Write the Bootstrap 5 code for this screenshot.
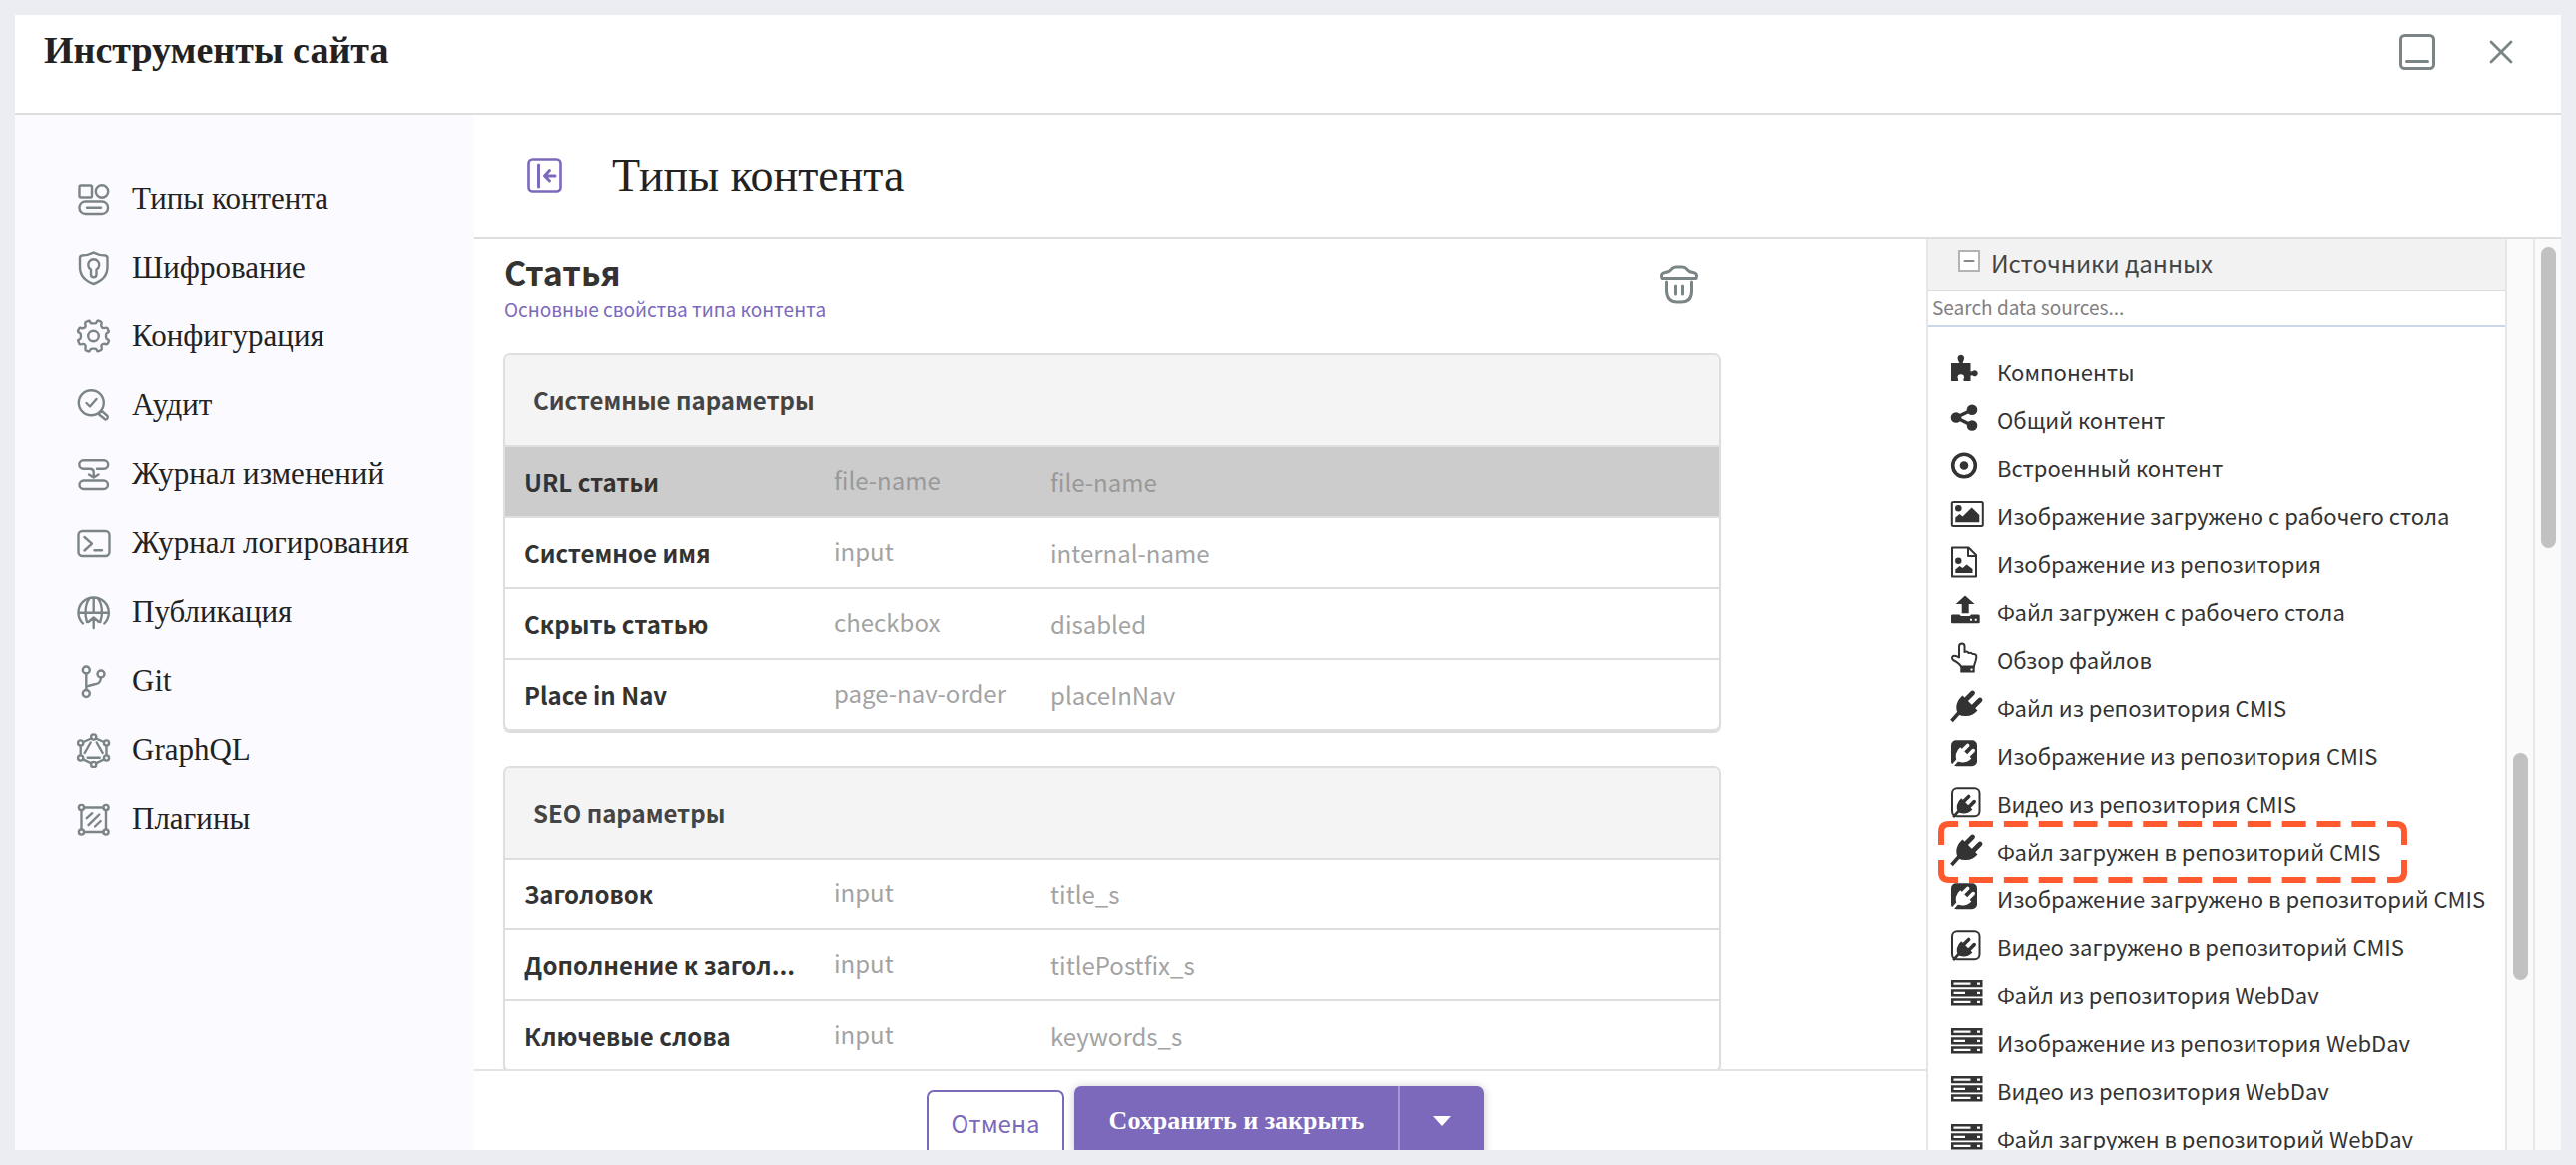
<!DOCTYPE html>
<html lang="ru">
<head>
<meta charset="utf-8">
<meta name="viewport" content="width=device-width, initial-scale=1">
<title>Инструменты сайта</title>
<link rel="stylesheet" href="https://cdn.jsdelivr.net/npm/bootstrap@5.3.0/dist/css/bootstrap.min.css">
<style>
  :root { --ui: "Noto Sans CJK SC", "Noto Sans", sans-serif; --serif: "Liberation Serif", serif; --accent: #7c69bc; --line: #dedede; --muted: #a3a3a3; }
  body { background: #ecedf2; font-family: var(--ui); font-size: 24px; line-height: 32px; color: #333; padding: 15px; }
  svg { fill: none; stroke: currentColor; stroke-width: 2; stroke-linecap: round; stroke-linejoin: round; flex: none; display: block; }
  .line-b { border-bottom: 2px solid var(--line); }
  .serif { font-family: var(--serif); color: #222; }
  .site-head { height: 100px; padding: 13px 46px 0 29px; }
  .site-head h1 { font-size: 38px; line-height: 44px; }
  .head-tools { gap: 50px; }
  .tool-btn { border: 0; background: none; padding: 0; color: #7c8585; }
  .side-nav { width: 460px; background: #fbfaff; padding: 49px 0 0 60px; font-size: 31px; }
  .side-nav a { height: 69px; gap: 21px; color: #222; text-decoration: none; }
  .side-nav svg { color: #7c8585; stroke-width: 2.4; }
  .view-head { height: 124px; padding: 0 50px; gap: 48px; }
  .view-head h2 { font-size: 46px; line-height: 54px; }
  .view-head .tool-btn { color: var(--accent); }
  .type-area { padding: 12px 205px 0 29px; }
  .type-title { font-size: 34px; line-height: 42px; }
  .type-link { font-size: 19px; line-height: 26px; color: var(--accent); text-decoration: none; }
  .type-head { height: 103px; padding: 0 20px 0 1px; }
  .params { border: 2px solid var(--line); border-radius: 7px; box-shadow: 0 2px 1px #dadada; overflow: hidden; margin-bottom: 35px; }
  .params table { width: 100%; table-layout: fixed; border-collapse: separate; border-spacing: 0; }
  .params .col-name { width: 329px; }
  .params .col-kind { width: 217px; }
  .params th, .params td { height: 71px; padding: 0; border-bottom: 2px solid var(--line); vertical-align: middle; }
  .params thead th { height: 92px; padding-left: 28px; background: #f4f4f4; color: #444; }
  .params tbody th { padding-left: 19px; color: #333; }
  .params td { color: var(--muted); }
  .params .kind { padding-bottom: 3px; }
  .params tbody tr:last-child > * { border-bottom: 0; height: 69px; }
  .params .picked > * { background: #ccc; color: #999; }
  .params .picked > th { color: #333; }
  .foot { height: 81px; border-top: 2px solid #e4e4e4; padding: 15px 0 0 10px; gap: 10px; }
  .foot .btn { height: 70px; border-radius: 7px; padding: 0; }
  .foot .btn-cancel { --bs-btn-hover-color: var(--accent); width: 138px; height: 66px; margin-top: 4px; border: 2px solid var(--accent); color: var(--accent); background: #fff; font-size: 24px; }
  .foot .btn-group { box-shadow: 0 1px 10px rgba(0,0,0,.22); border-radius: 7px; }
  .foot .btn-save { background: var(--accent); color: #fff; border: 0; width: 325px; font: 700 26px var(--serif); border-radius: 7px 0 0 7px; }
  .foot .btn-drop { background: var(--accent); color: #fff; border: 0; border-left: 2px solid #a598d2; width: 86px; border-radius: 0 7px 7px 0; }
  .sources { width: 582px; border: solid #e6e6e6; border-width: 0 2px; }
  .sources-head { height: 53px; padding: 0 0 4px 30px; gap: 11px; background: #f2f2f2; color: #444; }
  .sources .form-control { height: 36px; padding: 0 4px 4px; font-size: 19px; color: #555; border: 0; border-bottom: 2px solid #cbd7e8; box-shadow: none; }
  .sources .form-control::placeholder { color: #808080; }
  .sources ul { padding: 20px 0 0 22px; font-size: 22px; }
  .sources li { height: 48px; gap: 13px; white-space: nowrap; }
  .solid { fill: currentColor; stroke: none; }
  .frame-mark { top: -6px; left: -13px; color: #ff5a2f; }
  .track { width: 26px; background: #fafafa; }
  .track-inner { width: 28px; border-right: 2px solid #e8e8e8; }
  .thumb { width: 15px; border-radius: 8px; background: #c1c1c1; }
</style>
</head>
<body class="vh-100 overflow-hidden">
<svg width="0" height="0" class="position-absolute" aria-hidden="true">
  <defs>
    <g id="plugshape"><path d="M1.500 34 L9 25.500" stroke-width="3.600" stroke-linecap="butt"/><path d="M16 12.500 L22.500 6 M23.500 19.500 L30 13" stroke-width="4.800"/><path d="M12.500 8.500 L27.500 23.500 Q22 29.500 15 29 Q11 29 8.500 27.500 Q5.500 23 6.500 18 Q8 12 12.500 8.500z" fill="currentColor" stroke="none"/></g>
  </defs>
  <symbol id="types" viewBox="0 0 36 36"><rect x="4.500" y="4.500" width="12.500" height="12" rx="1.500"/><circle cx="27" cy="10.500" r="6.200"/><rect x="4.500" y="20.500" width="28.500" height="12.500" rx="6"/><path d="M12 26.700h14"/></symbol>
  <symbol id="shield" viewBox="0 0 36 36"><path d="M18.700 2.500 C14 5 10 5.500 7 5.500 Q5 6 5 8 V17 C5 25 10 31 18.700 34 C27 31 32.500 25 32.500 17 V8 Q32.500 6 30.500 5.500 C27 5.500 23 5 18.700 2.500z"/><path d="M16 19.500 a5.500 5.500 0 1 1 5.500 0 V24.500 a2.700 2.700 0 0 1 -5.500 0z"/></symbol>
  <symbol id="gear" viewBox="0 0 36 36"><g transform="translate(18.500 18)"><path d="M-1.500 -12.600 H1.500 Q3 -12.700 3.500 -14.500 Q4.200 -16 5.500 -15.200 L7.500 -14.300 Q8.500 -13.700 8 -12 Q7.500 -10.500 8 -9.500 Q9 -7.500 11 -8 Q13 -8.800 14 -7.800 L15.200 -5 Q15.700 -3.800 14 -3.300 Q12.600 -2.800 12.600 -1.500 V1.500 Q12.700 3 14.500 3.500 Q16 4.200 15.200 5.500 L14.300 7.500 Q13.700 8.500 12 8 Q10.500 7.500 9.500 8 Q7.500 9 8 11 Q8.800 13 7.800 14 L5 15.200 Q3.800 15.700 3.300 14 Q2.800 12.600 1.500 12.600 H-1.500 Q-3 12.700 -3.500 14.500 Q-4.200 16 -5.500 15.200 L-7.500 14.300 Q-8.500 13.700 -8 12 Q-7.500 10.500 -8 9.500 Q-9 7.500 -11 8 Q-13 8.800 -14 7.800 L-15.200 5 Q-15.700 3.800 -14 3.300 Q-12.600 2.800 -12.600 1.500 V-1.500 Q-12.700 -3 -14.500 -3.500 Q-16 -4.200 -15.200 -5.500 L-14.300 -7.500 Q-13.700 -8.500 -12 -8 Q-10.500 -7.500 -9.500 -8 Q-7.500 -9 -8 -11 Q-8.800 -13 -7.800 -14 L-5 -15.200 Q-3.800 -15.700 -3.300 -14 Q-2.800 -12.600 -1.500 -12.600z"/><circle r="5.300"/></g></symbol>
  <symbol id="audit" viewBox="0 0 36 36"><circle cx="16.300" cy="15.700" r="12.500"/><path d="M11.500 16 L15 19.500 L21.500 12"/><path d="M23.500 27 L26.800 23.800 L32.500 29 Q33.500 30.500 32.300 31.700 Q30.800 33 29.500 31.800z"/></symbol>
  <symbol id="changes" viewBox="0 0 36 36"><path d="M22 12.700 H29 a4.200 4.200 0 0 0 0 -8.400 H8.500 a4.200 4.200 0 0 0 0 8.400 H15 Q18.700 12.700 18.700 16 V21 M14 18.500 L18.700 21.500 L23.500 18.500"/><rect x="4.500" y="24.500" width="28.500" height="8.500" rx="4.200"/></symbol>
  <symbol id="console" viewBox="0 0 36 36"><rect x="3.500" y="6" width="31" height="25" rx="4"/><path d="M9.500 12 L17 18.700 L9.500 25.500 M19.500 25.300 H27"/></symbol>
  <symbol id="globe" viewBox="0 0 36 36"><path d="M8 29.500 A15.200 15.200 0 1 1 29.300 29.500 M3.500 18.800 H34 M18.700 4 V18.800 M12 28 C9.500 21 10 9 15 4 M25.300 28 C28 21 27.500 9 22.500 4 M18.700 34 V24 M13.500 28 L18.700 23.500 L24 28"/></symbol>
  <symbol id="git" viewBox="0 0 36 36"><circle cx="11.300" cy="7" r="3.500"/><circle cx="26" cy="11" r="3.500"/><circle cx="11.300" cy="30.500" r="3.500"/><path d="M11.300 10.500 V27 M26 14.500 C25.500 23 20 20 12 23.500"/></symbol>
  <symbol id="graph" viewBox="0 0 36 36"><g><circle cx="18.700" cy="5" r="2.600"/><circle cx="31.500" cy="11" r="2.600"/><circle cx="31.500" cy="26" r="2.600"/><circle cx="18.700" cy="32.500" r="2.600"/><circle cx="5.700" cy="26" r="2.600"/><circle cx="5.700" cy="11" r="2.600"/></g><path d="M21 6.500 L29 10 M16.300 6.500 L8.300 10 M5.700 13.700 V23.300 M31.500 13.700 V23.300 M8 27.300 L16.300 31.300 M29.200 27.300 L21 31.300 M9.700 21 L15.700 10.500 M21.700 10.500 L27.700 21 M12.700 25.700 H24.700"/></symbol>
  <symbol id="plugins" viewBox="0 0 36 36"><circle cx="6.500" cy="6.500" r="2.600"/><circle cx="31" cy="6.500" r="2.600"/><circle cx="6.500" cy="31" r="2.600"/><circle cx="31" cy="31" r="2.600"/><path d="M9 6.500 H28.500 M9 31 H28.500 M6.500 9 V28.500 M31 9 V28.500 M11.700 17.200 L17.300 12.200 M13.500 24.200 L24.300 13.500 M20 25.500 L25.700 20"/></symbol>

  <symbol id="puzzle" viewBox="0 0 34 40"><path class="solid" d="M1 12 H9.500 Q8.500 11 7.800 8.500 A3.300 3.300 0 1 1 13.800 8.500 Q13 11 12.500 12 H20.500 V20.500 Q22 20.500 23.500 19.500 A3 3 0 1 1 23.500 25 Q22 24 20.500 24.500 V30 H13.500 Q13 28.500 14 26.500 A3.200 3.200 0 1 0 7.500 26.500 Q8.500 28.500 8 30 H1z"/></symbol>
  <symbol id="share" viewBox="0 0 34 40"><path d="M22 10.700 L6 18.500 L22 26.500" stroke-width="3.500"/><g class="solid"><circle cx="6" cy="18.500" r="5.300"/><circle cx="22" cy="10.700" r="5.300"/><circle cx="22" cy="26.500" r="5.300"/></g></symbol>
  <symbol id="target" viewBox="0 0 34 40"><circle cx="14" cy="18.500" r="11.300" stroke-width="3.600"/><circle class="solid" cx="14" cy="18.500" r="4.300"/></symbol>
  <symbol id="picture" viewBox="0 0 34 40"><rect x="1.800" y="7" width="31" height="24" rx="1.500"/><circle class="solid" cx="8.300" cy="13.300" r="3.300"/><path class="solid" d="M5.300 27.300 V22.500 L9.500 19 L12.500 21.500 L21.700 12.500 L29.300 20 V27.300z"/></symbol>
  <symbol id="filepic" viewBox="0 0 34 40"><path d="M2 4.500 H18.500 L26 12 V33.500 H2z M18 5 V13 H26"/><circle class="solid" cx="8.300" cy="17.700" r="3.200"/><path class="solid" d="M5.300 30 V26.500 L9.500 23 L12.500 25 L16.500 21.500 L22.500 26 V30z"/></symbol>
  <symbol id="upload" viewBox="0 0 34 40"><path class="solid" d="M15 4.500 L24.500 13 H18.700 V22.300 H11.700 V13 H5.700z"/><path class="solid" fill-rule="evenodd" d="M2 23.500 H9.500 Q10 25 12 25 H18.500 Q20.500 25 21 23.500 H28.500 Q29.700 23.500 29.700 25 V31 Q29.700 32.300 28.500 32.300 H2 Q1 32.300 1 31 V25 Q1 23.500 2 23.500z M20 27.800 V29.800 H22 V27.800z M24.700 27.800 V29.800 H26.700 V27.800z"/></symbol>
  <symbol id="hand" viewBox="0 0 34 40"><path d="M11 27.500 C9.500 24.500 6 22.500 3 21 Q1 18.500 3 17 Q5.500 16 9 18.500 V7 Q9.500 4.500 11.700 4.500 Q14.300 4.500 14.500 7 V13 Q17 11.500 18.500 14 Q21 13 22.500 15 Q26.500 14.500 26.300 18 C26.300 22 24.500 23 24 27.500z"/><path class="solid" fill-rule="evenodd" d="M10.300 27.500 H24.700 V33.500 H10.300z M20.500 29.500 V31.500 H22.500 V29.500z"/></symbol>
  <symbol id="plug" viewBox="0 0 34 40"><use href="#plugshape"/></symbol>
  <symbol id="plugfill" viewBox="0 0 34 40"><rect class="solid" x="1" y="5.300" width="26" height="26" rx="5"/><g style="color:#fff" transform="translate(1 6) scale(.74)"><use href="#plugshape"/></g></symbol>
  <symbol id="plugbox" viewBox="0 0 34 40"><rect x="2" y="5.300" width="27.500" height="28" rx="5"/><g transform="translate(2 9) scale(.74)"><use href="#plugshape"/></g></symbol>
  <symbol id="server" viewBox="0 0 34 40"><path class="solid" fill-rule="evenodd" d="M1 6h31.500v7.200H1z M3.500 8.500v2.200h17v-2.200z M27 8.500v2.200h3v-2.200z M1 15.200h31.500v7.200H1z M3.500 17.700v2.200h11.500v-2.200z M27 17.700v2.200h3v-2.200z M1 24.200h31.500v7.200H1z M3.500 26.700v2.200h17v-2.200z M27 26.700v2.200h3v-2.200z"/></symbol>
</svg>

<div class="bg-white h-100 d-flex flex-column overflow-hidden">
  <header class="site-head line-b d-flex align-items-start justify-content-between flex-shrink-0">
    <h1 class="serif fw-bold m-0">Инструменты сайта</h1>
    <div class="head-tools d-flex align-items-center">
      <button type="button" class="tool-btn" aria-label="Свернуть"><svg width="40" height="48" viewBox="0 0 40 48"><rect x="3.500" y="7.500" width="33" height="33" rx="4" stroke-width="3"/><path d="M9.500 33.500 H30.500" stroke-width="3"/></svg></button>
      <button type="button" class="tool-btn" aria-label="Закрыть"><svg width="28" height="48" viewBox="0 0 28 48"><path d="M4 14 L24 34 M24 14 L4 34" stroke-width="2.800"/></svg></button>
    </div>
  </header>

  <div class="d-flex flex-grow-1 overflow-hidden">
    <nav class="side-nav serif flex-shrink-0 d-flex flex-column" aria-label="Инструменты">
      <a href="#" class="d-flex align-items-center"><svg width="36" height="36"><use href="#types"/></svg>Типы контента</a>
      <a href="#" class="d-flex align-items-center"><svg width="36" height="36"><use href="#shield"/></svg>Шифрование</a>
      <a href="#" class="d-flex align-items-center"><svg width="36" height="36"><use href="#gear"/></svg>Конфигурация</a>
      <a href="#" class="d-flex align-items-center"><svg width="36" height="36"><use href="#audit"/></svg>Аудит</a>
      <a href="#" class="d-flex align-items-center"><svg width="36" height="36"><use href="#changes"/></svg>Журнал изменений</a>
      <a href="#" class="d-flex align-items-center"><svg width="36" height="36"><use href="#console"/></svg>Журнал логирования</a>
      <a href="#" class="d-flex align-items-center"><svg width="36" height="36"><use href="#globe"/></svg>Публикация</a>
      <a href="#" class="d-flex align-items-center"><svg width="36" height="36"><use href="#git"/></svg>Git</a>
      <a href="#" class="d-flex align-items-center"><svg width="36" height="36"><use href="#graph"/></svg>GraphQL</a>
      <a href="#" class="d-flex align-items-center"><svg width="36" height="36"><use href="#plugins"/></svg>Плагины</a>
    </nav>

    <div class="d-flex flex-column flex-grow-1 overflow-hidden">
      <div class="view-head line-b d-flex align-items-center flex-shrink-0">
        <button type="button" class="tool-btn" aria-label="Скрыть меню"><svg width="40" height="40" viewBox="0 0 40 40"><rect x="4.500" y="3.500" width="32" height="32" rx="4" stroke-width="2.600"/><path d="M14.500 9 V31" stroke-width="3"/><path d="M31 20 H21 M25.500 14.500 L20.500 20 L25.500 25" stroke-width="3"/></svg></button>
        <h2 class="serif fw-normal m-0">Типы контента</h2>
      </div>

      <div class="d-flex flex-grow-1 overflow-hidden">
        <main class="d-flex flex-column flex-grow-1 overflow-hidden">
          <div class="type-area flex-grow-1 overflow-hidden">
            <div class="type-head d-flex justify-content-between">
              <div class="d-flex flex-column align-items-start">
                <h3 class="type-title fw-bold m-0">Статья</h3>
                <a href="#" class="type-link mt-1">Основные свойства типа контента</a>
              </div>
              <button type="button" class="tool-btn align-self-start mt-2" aria-label="Удалить"><svg width="44" height="52" viewBox="0 0 44 52"><g stroke-width="3"><path d="M5 19.500 H39 Q41 14.500 36 13.500 C32 13.500 31 12 29 9.500 Q27.500 8 25 8 H19 Q17 8 15 9.500 C13 12 12 13.500 8 13.500 Q3 14.500 5 19.500z"/><path d="M9.500 23 V33 Q10 44 20 44 H24 Q34.500 44 34.500 33 V23 M18.500 27 V36 M25.500 27 V36"/></g></svg></button>
            </div>

            <section class="params">
              <table>
                <colgroup><col class="col-name"><col class="col-kind"><col></colgroup>
                <thead><tr><th colspan="3" scope="colgroup">Системные параметры</th></tr></thead>
                <tbody>
                  <tr class="picked"><th scope="row">URL статьи</th><td class="kind">file-name</td><td>file-name</td></tr>
                  <tr><th scope="row">Системное имя</th><td class="kind">input</td><td>internal-name</td></tr>
                  <tr><th scope="row">Скрыть статью</th><td class="kind">checkbox</td><td>disabled</td></tr>
                  <tr><th scope="row">Place in Nav</th><td class="kind">page-nav-order</td><td>placeInNav</td></tr>
                </tbody>
              </table>
            </section>

            <section class="params">
              <table>
                <colgroup><col class="col-name"><col class="col-kind"><col></colgroup>
                <thead><tr><th colspan="3" scope="colgroup">SEO параметры</th></tr></thead>
                <tbody>
                  <tr><th scope="row">Заголовок</th><td class="kind">input</td><td>title_s</td></tr>
                  <tr><th scope="row">Дополнение к загол...</th><td class="kind">input</td><td>titlePostfix_s</td></tr>
                  <tr><th scope="row">Ключевые слова</th><td class="kind">input</td><td>keywords_s</td></tr>
                </tbody>
              </table>
            </section>
          </div>

          <div class="foot d-flex justify-content-center align-items-start flex-shrink-0">
            <button type="button" class="btn btn-cancel">Отмена</button>
            <div class="btn-group">
              <button type="button" class="btn btn-save">Сохранить и закрыть</button>
              <button type="button" class="btn btn-drop d-flex align-items-center justify-content-center" aria-label="Другие варианты"><svg width="20" height="12" viewBox="0 0 20 12"><path class="solid" d="M1 1 H19 L10 11z"/></svg></button>
            </div>
          </div>
        </main>

        <aside class="sources flex-shrink-0 overflow-hidden">
          <div class="sources-head line-b d-flex align-items-center">
            <svg width="22" height="26" viewBox="0 0 22 26"><rect x="1" y="1" width="20" height="20" fill="#fff" stroke="#b3b3b3" stroke-linejoin="miter"/><path d="M6.500 11 H15.500" stroke="#888"/></svg>
            <span>Источники данных</span>
          </div>
          <input type="search" class="form-control rounded-0" placeholder="Search data sources..." aria-label="Search data sources">
          <ul class="list-unstyled m-0">
            <li class="d-flex align-items-center"><svg width="34" height="40"><use href="#puzzle"/></svg>Компоненты</li>
            <li class="d-flex align-items-center"><svg width="34" height="40"><use href="#share"/></svg>Общий контент</li>
            <li class="d-flex align-items-center"><svg width="34" height="40"><use href="#target"/></svg>Встроенный контент</li>
            <li class="d-flex align-items-center"><svg width="34" height="40"><use href="#picture"/></svg>Изображение загружено с рабочего стола</li>
            <li class="d-flex align-items-center"><svg width="34" height="40"><use href="#filepic"/></svg>Изображение из репозитория</li>
            <li class="d-flex align-items-center"><svg width="34" height="40"><use href="#upload"/></svg>Файл загружен с рабочего стола</li>
            <li class="d-flex align-items-center"><svg width="34" height="40"><use href="#hand"/></svg>Обзор файлов</li>
            <li class="d-flex align-items-center"><svg width="34" height="40"><use href="#plug"/></svg>Файл из репозитория CMIS</li>
            <li class="d-flex align-items-center"><svg width="34" height="40"><use href="#plugfill"/></svg>Изображение из репозитория CMIS</li>
            <li class="d-flex align-items-center"><svg width="34" height="40"><use href="#plugbox"/></svg>Видео из репозитория CMIS</li>
            <li class="d-flex align-items-center position-relative"><svg width="34" height="40"><use href="#plug"/></svg>Файл загружен в репозиторий CMIS
              <svg class="frame-mark position-absolute" width="474" height="64" viewBox="0 0 474 64"><g stroke-width="6" stroke-linecap="butt"><path d="M4 24 V11 Q4 3 12 3 H21 M451 3 H460 Q468 3 468 11 V24 M468 39 V52 Q468 60 460 60 H451 M21 60 H12 Q4 60 4 52 V39"/><path d="M32 3 H445 M32 60 H445" stroke-dasharray="24 10.850"/></g></svg></li>
            <li class="d-flex align-items-center"><svg width="34" height="40"><use href="#plugfill"/></svg>Изображение загружено в репозиторий CMIS</li>
            <li class="d-flex align-items-center"><svg width="34" height="40"><use href="#plugbox"/></svg>Видео загружено в репозиторий CMIS</li>
            <li class="d-flex align-items-center"><svg width="34" height="40"><use href="#server"/></svg>Файл из репозитория WebDav</li>
            <li class="d-flex align-items-center"><svg width="34" height="40"><use href="#server"/></svg>Изображение из репозитория WebDav</li>
            <li class="d-flex align-items-center"><svg width="34" height="40"><use href="#server"/></svg>Видео из репозитория WebDav</li>
            <li class="d-flex align-items-center"><svg width="34" height="40"><use href="#server"/></svg>Файл загружен в репозиторий WebDav</li>
          </ul>
        </aside>

        <div class="track track-inner flex-shrink-0 d-flex flex-column align-items-center">
          <div style="height:56.4%"></div>
          <div class="thumb" style="height:25%"></div>
        </div>
        <div class="track flex-shrink-0 d-flex flex-column align-items-center pt-2">
          <div class="thumb" style="height:33.4%"></div>
        </div>
      </div>
    </div>
  </div>
</div>
<script src="https://cdn.jsdelivr.net/npm/bootstrap@5.3.0/dist/js/bootstrap.bundle.min.js"></script>
</body>
</html>
